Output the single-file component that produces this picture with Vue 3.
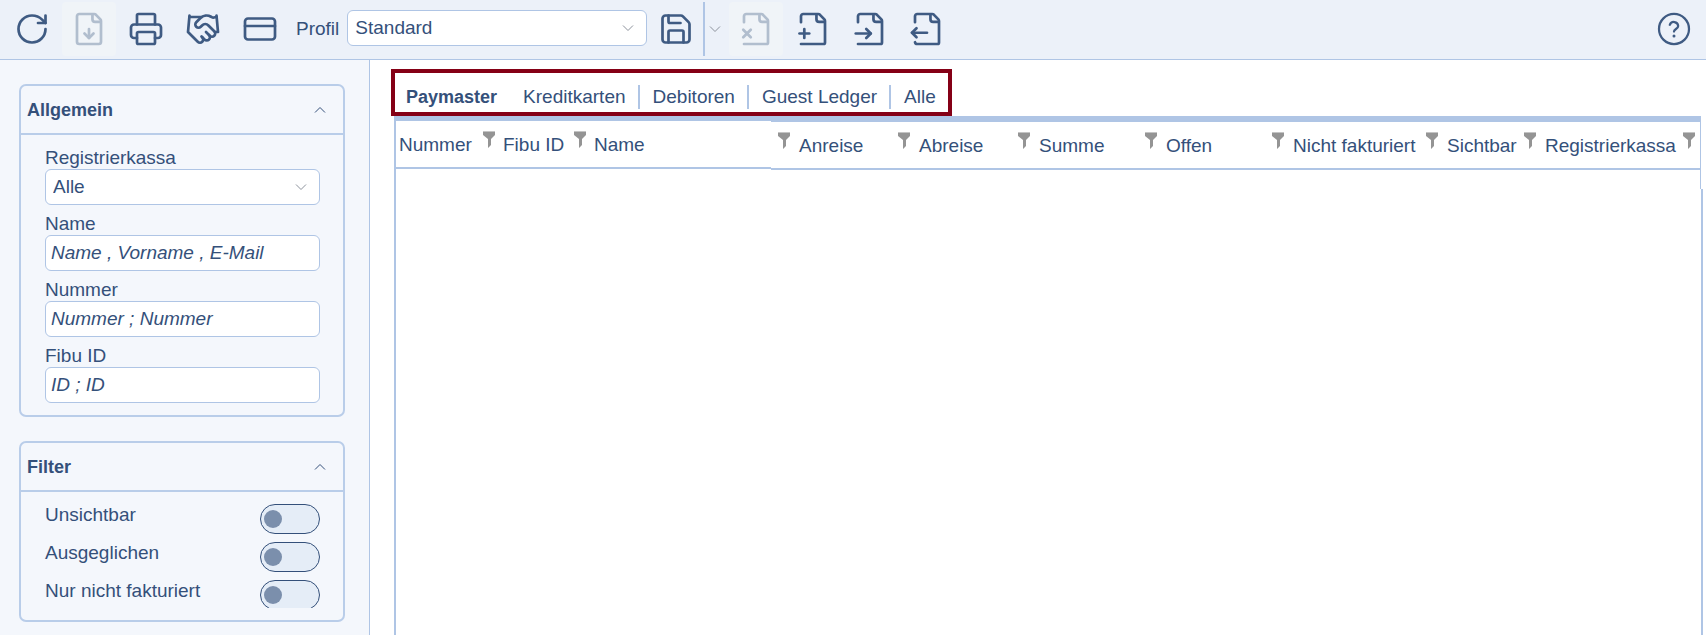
<script setup>
import { ref } from 'vue'

const fold = 'M14.3 2.2v3.3a1.8 1.8 0 0 0 1.8 1.8h3.6'
const file = ['M4 22h15a1 1 0 0 0 1-1V6.6a1.5 1.5 0 0 0-.4-1L16.5 2.4a1.5 1.5 0 0 0-1-.4H5.5a1.5 1.5 0 0 0-1.5 1.5v4', fold]

const leftTools = [
  { label: 'Aktualisieren', paths: ['M21 12a9 9 0 1 1-9-9c2.52 0 4.93 1 6.74 2.74L21 8', 'M21 3v5h-5'] },
  {
    label: 'Exportieren',
    disabled: true,
    paths: [
      'M15.5 2h-10a1.5 1.5 0 0 0-1.5 1.5v17a1.5 1.5 0 0 0 1.5 1.5h13a1.5 1.5 0 0 0 1.5-1.5V6.6a1.5 1.5 0 0 0-.4-1L16.5 2.4a1.5 1.5 0 0 0-1-.4z',
      fold,
      'M12 12v6',
      'm9 15 3 3 3-3',
    ],
  },
  {
    label: 'Drucken',
    paths: [
      'M6 18H4a2 2 0 0 1-2-2v-5a2 2 0 0 1 2-2h16a2 2 0 0 1 2 2v5a2 2 0 0 1-2 2h-2',
      'M6 9V3a1 1 0 0 1 1-1h10a1 1 0 0 1 1 1v6',
      'M7 14h10a1 1 0 0 1 1 1v6a1 1 0 0 1-1 1H7a1 1 0 0 1-1-1v-6a1 1 0 0 1 1-1z',
    ],
  },
  {
    label: 'Abschließen',
    paths: [
      'm11 17 2 2a1 1 0 1 0 3-3',
      'm14 14 2.5 2.5a1 1 0 1 0 3-3l-3.88-3.88a3 3 0 0 0-4.24 0l-.88.88a1 1 0 1 1-3-3l2.81-2.81a5.79 5.79 0 0 1 7.06-.87l.47.28a2 2 0 0 0 1.42.25L21 4',
      'm21 3 1 11h-2',
      'M3 3 2 14l6.5 6.5a1 1 0 1 0 3-3',
      'M3 4h8',
    ],
  },
  { label: 'Zahlung', paths: ['M4 5h16a2 2 0 0 1 2 2v10a2 2 0 0 1-2 2H4a2 2 0 0 1-2-2V7a2 2 0 0 1 2-2z', 'M2 10h20'] },
]

const savePaths = [
  'M15.2 3a2 2 0 0 1 1.4.6l3.8 3.8a2 2 0 0 1 .6 1.4V19a2 2 0 0 1-2 2H5a2 2 0 0 1-2-2V5a2 2 0 0 1 2-2z',
  'M17 21v-7a1 1 0 0 0-1-1H8a1 1 0 0 0-1 1v7',
  'M7 3v4a1 1 0 0 0 1 1h7',
]

const fileTools = [
  { label: 'Löschen', disabled: true, paths: [...file, 'm8.5 12.5-5 5', 'm3.5 12.5 5 5'] },
  { label: 'Neu', paths: [...file, 'M3 15h6.500', 'M6.2 12v6'] },
  { label: 'Check-in', paths: [...file, 'M2.5 15h10', 'm9.5 18 3-3-3-3'] },
  {
    label: 'Check-out',
    paths: [
      'M4 7.5v-4a1.5 1.5 0 0 1 1.5-1.5h10a1.5 1.5 0 0 1 1 .4L19.6 5.6a1.5 1.5 0 0 1 .4 1V21a1 1 0 0 1-1 1H5.5a1.5 1.5 0 0 1-1.5-1.2',
      fold,
      'M2 14.5h10',
      'm5 11.5-3 3 3 3',
    ],
  },
]

const fields = [
  { id: 'name', label: 'Name', hint: 'Name , Vorname , E-Mail' },
  { id: 'nummer', label: 'Nummer', hint: 'Nummer ; Nummer' },
  { id: 'fibu', label: 'Fibu ID', hint: 'ID ; ID' },
]

const toggles = ref([
  { id: 'unsichtbar', label: 'Unsichtbar', on: false },
  { id: 'ausgeglichen', label: 'Ausgeglichen', on: false },
  { id: 'offen', label: 'Nur nicht fakturiert', on: false },
])

const tabs = ['Paymaster', 'Kreditkarten', 'Debitoren', 'Guest Ledger', 'Alle']
const active = ref('Paymaster')

const frozenCols = [
  { label: 'Nummer', cls: 'w-104', filter: true },
  { label: 'Fibu ID', cls: 'w-91', filter: true },
  { label: 'Name', cls: '', filter: false },
]
const cols = [
  { label: '', cls: 'w-24', filter: true },
  { label: 'Anreise', cls: 'w-120', filter: true },
  { label: 'Abreise', cls: 'w-120', filter: true },
  { label: 'Summe', cls: 'w-127', filter: true },
  { label: 'Offen', cls: 'w-127', filter: true },
  { label: 'Nicht fakturiert', cls: 'w-154', filter: true },
  { label: 'Sichtbar', cls: 'w-98', filter: true },
  { label: 'Registrierkassa', cls: '', filter: true },
]
</script>

<template>
  <div class="app">
    <header class="toolbar">
      <div class="group">
        <button v-for="t in leftTools" :key="t.label" type="button" class="tool" :disabled="t.disabled" :aria-label="t.label">
          <svg class="icon" viewBox="0 0 24 24"><path v-for="p in t.paths" :key="p" :d="p" /></svg>
        </button>
      </div>
      <label class="profile-label" for="profil">Profil</label>
      <div class="select profile">
        <select id="profil"><option>Standard</option></select>
        <svg class="chevron" viewBox="0 0 12 6"><path d="M1 0.5l5 5 5-5" /></svg>
      </div>
      <button type="button" class="tool save" aria-label="Speichern">
        <svg class="icon" viewBox="0 0 24 24"><path v-for="p in savePaths" :key="p" :d="p" /></svg>
      </button>
      <button type="button" class="more" aria-label="Weitere">
        <svg class="chevron-plain" viewBox="0 0 12 6"><path d="M1 0.5l5 5 5-5" /></svg>
      </button>
      <div class="group">
        <button v-for="t in fileTools" :key="t.label" type="button" class="tool" :disabled="t.disabled" :aria-label="t.label">
          <svg class="icon" viewBox="0 0 24 24"><path v-for="p in t.paths" :key="p" :d="p" /></svg>
        </button>
      </div>
      <button type="button" class="tool help" aria-label="Hilfe">
        <svg class="icon thin" viewBox="0 0 24 24">
          <circle cx="12" cy="12" r="10" />
          <path d="M9.2 9.2a2.9 2.9 0 0 1 5.6.8c0 1.9-2.8 2.1-2.8 3.7" />
          <path class="dot" d="M12 16.6h.01" />
        </svg>
      </button>
    </header>

    <div class="content">
      <aside class="sidebar">
        <section class="card">
          <button type="button" class="card-head">
            Allgemein
            <svg class="chevron-plain dark" viewBox="0 0 12 6"><path d="M1 5.5l5-5 5 5" /></svg>
          </button>
          <div class="card-body">
            <div class="field">
              <label for="kassa">Registrierkassa</label>
              <div class="select">
                <select id="kassa"><option>Alle</option></select>
                <svg class="chevron" viewBox="0 0 12 6"><path d="M1 0.5l5 5 5-5" /></svg>
              </div>
            </div>
            <div v-for="f in fields" :key="f.id" class="field">
              <label :for="f.id">{{ f.label }}</label>
              <input :id="f.id" type="text" :placeholder="f.hint" />
            </div>
          </div>
        </section>

        <section class="card">
          <button type="button" class="card-head">
            Filter
            <svg class="chevron-plain dark" viewBox="0 0 12 6"><path d="M1 5.5l5-5 5 5" /></svg>
          </button>
          <div class="card-body toggles">
            <div v-for="t in toggles" :key="t.id" class="toggle-row">
              <label :for="t.id">{{ t.label }}</label>
              <input :id="t.id" v-model="t.on" type="checkbox" role="switch" class="switch" />
            </div>
          </div>
        </section>
      </aside>

      <main class="main">
        <nav class="tabs">
          <button
            v-for="t in tabs"
            :key="t"
            type="button"
            class="tab"
            :class="{ active: t === active }"
            @click="active = t"
          >
            {{ t }}
          </button>
        </nav>
        <div class="grid">
          <div class="grid-head">
            <table class="frozen">
              <thead>
                <tr>
                  <th v-for="c in frozenCols" :key="c.label" :class="c.cls">
                    <div class="cell">
                      <span>{{ c.label }}</span>
                      <svg v-if="c.filter" class="funnel" viewBox="0 0 12 17"><path class="rim" d="M0 0h12v1H0z" /><path d="M0 1h12v3L8 8v6l-3 3V8L0 4z" /></svg>
                    </div>
                  </th>
                </tr>
              </thead>
            </table>
            <table class="scrolling">
              <thead>
                <tr>
                  <th v-for="c in cols" :key="c.label" :class="c.cls">
                    <div class="cell">
                      <span>{{ c.label }}</span>
                      <svg v-if="c.filter" class="funnel" viewBox="0 0 12 17"><path class="rim" d="M0 0h12v1H0z" /><path d="M0 1h12v3L8 8v6l-3 3V8L0 4z" /></svg>
                    </div>
                  </th>
                </tr>
              </thead>
            </table>
          </div>
          <div class="grid-gap"></div>
          <div class="grid-body"></div>
        </div>
      </main>
    </div>
  </div>
</template>

<style>
body {
  margin: 0;
}
</style>

<style scoped>
.app {
  --ink: #34507a;
  --line: #afc5e5;
  display: flex;
  flex-direction: column;
  min-height: 100vh;
  font-family: "Liberation Sans", Arial, sans-serif;
  font-size: 19px;
  line-height: 22px;
  color: var(--ink);
  background: #fff;
}
.app *,
.app *::before,
.app *::after {
  box-sizing: border-box;
}
button,
input,
select {
  margin: 0;
  font: inherit;
  color: inherit;
}
button {
  padding: 0;
  border: 0;
  background: none;
}

/* Toolbar */
.toolbar {
  display: flex;
  align-items: flex-start;
  height: 60px;
  padding: 2px 5px 0;
  background: #ecf1f9;
  border-bottom: 1px solid var(--line);
}
.group {
  display: flex;
  gap: 3px;
}
.tool {
  display: flex;
  align-items: center;
  justify-content: center;
  width: 54px;
  height: 54px;
  flex: none;
  border-radius: 4px;
}
.tool:disabled {
  background: #f0f4f8;
}
.tool:disabled .icon {
  opacity: 0.35;
}
.icon {
  width: 36px;
  height: 36px;
  fill: none;
  stroke: #3f5b83;
  stroke-width: 1.8;
  stroke-linecap: round;
  stroke-linejoin: round;
}
.profile-label {
  margin: 16px 8px 0 9px;
}
.profile {
  width: 300px;
  margin-top: 8px;
}
.save {
  margin-left: 2px;
}
.more {
  display: flex;
  align-items: center;
  width: 22px;
  height: 54px;
  padding-left: 4px;
  margin-right: 4px;
  border-left: 2px solid var(--line);
}
.help {
  margin-left: auto;
}
.thin {
  stroke-width: 1.5;
}
.dot {
  stroke-width: 2;
}

.select {
  position: relative;
}
.select select {
  display: block;
  width: 100%;
  padding-left: 7px;
  appearance: none;
}
.select select,
.field input {
  height: 36px;
  background: #fff;
  border: 1px solid var(--line);
  border-radius: 6px;
  outline: 0;
}
.chevron,
.chevron-plain {
  width: 12px;
  height: 6px;
  fill: none;
  stroke: #8c929c;
  stroke-width: 1;
  overflow: visible;
}
.chevron {
  position: absolute;
  top: 15px;
  right: 13px;
  pointer-events: none;
}
.dark {
  stroke: var(--ink);
}

/* Sidebar */
.content {
  display: flex;
  flex: 1;
}
.sidebar {
  flex: none;
  display: flex;
  flex-direction: column;
  gap: 24px;
  width: 370px;
  padding: 24px 24px 12px 19px;
  background: #f4f7fc;
  border-right: 1px solid var(--line);
}
.card {
  border: 2px solid #b9cde9;
  border-radius: 7px;
}
.card-head {
  display: flex;
  align-items: center;
  justify-content: space-between;
  width: 100%;
  height: 49px;
  padding: 0 17px 0 6px;
  font-size: 18px;
  font-weight: 700;
  border-bottom: 2px solid #b9cde9;
}
.card-body {
  padding: 12px 23px 12px 24px;
}
.field {
  display: flex;
  flex-direction: column;
}
.field + .field {
  margin-top: 8px;
}
.field input {
  width: 100%;
  padding: 0 5px;
}
.field input::placeholder {
  color: var(--ink);
  font-style: italic;
  opacity: 1;
}
.toggle-row {
  display: flex;
  justify-content: space-between;
  height: 38px;
}
.toggle-row:last-child {
  height: 28px;
  overflow: hidden;
}
.switch {
  flex: none;
  width: 60px;
  height: 30px;
  padding: 5px 3px;
  appearance: none;
  background: #e5edf7;
  border: 1px solid var(--ink);
  border-radius: 15px;
}
.switch::before {
  content: "";
  display: block;
  width: 18px;
  height: 18px;
  border-radius: 50%;
  background: #7b8fac;
}
.switch:checked::before {
  margin-left: auto;
  background: var(--ink);
}

/* Main area */
.main {
  flex: 1;
  min-width: 0;
  display: flex;
  flex-direction: column;
  padding: 9px 3px 0 21px;
}
.tabs {
  align-self: flex-start;
  display: flex;
  align-items: center;
  height: 47px;
  padding: 8px 0 0;
  border: 4px solid #850016;
}
.tab {
  height: 24px;
  padding: 0 12px 0 13px;
  white-space: nowrap;
  border-left: 2px solid var(--line);
}
.tab:first-child {
  padding: 0 11px 0 9px;
}
.tab:first-child,
.tab:nth-child(2) {
  border-left-color: transparent;
}
.tab.active {
  font-size: 18px;
  font-weight: 700;
}
.grid {
  flex: 1;
  display: flex;
  flex-direction: column;
  margin-left: 3px;
  border-left: 2px solid var(--line);
}
.grid-head {
  display: flex;
  align-items: flex-start;
  margin-right: 2px;
  border-top: 5px solid var(--line);
  border-right: 1px solid var(--line);
}
table {
  table-layout: fixed;
  border-collapse: separate;
  border-spacing: 0;
}
.frozen {
  flex: none;
  width: 375px;
}
.scrolling {
  flex: 1;
  width: 100%;
  border-top: 1px solid var(--line);
}
th {
  height: 48px;
  padding: 0 5px 0 4px;
  font-weight: 400;
  text-align: left;
  white-space: nowrap;
  border-bottom: 2px solid var(--line);
}
.frozen th {
  padding-left: 3px;
}
.cell {
  display: flex;
  align-items: flex-start;
  justify-content: space-between;
  height: 28px;
}
.cell span {
  padding-top: 4px;
}
.funnel {
  flex: none;
  width: 12px;
  height: 17px;
  margin-top: 1px;
  fill: #949494;
}
.rim {
  fill: #c4c4c4;
}
.w-24 { width: 24px; }
.w-91 { width: 91px; }
.w-98 { width: 98px; }
.w-104 { width: 104px; }
.w-120 { width: 120px; }
.w-127 { width: 127px; }
.w-154 { width: 154px; }
.grid-gap {
  height: 19px;
  margin-right: 2px;
  border-right: 1px solid var(--line);
}
.grid-body {
  flex: 1;
  border-right: 2px solid var(--line);
}
</style>
